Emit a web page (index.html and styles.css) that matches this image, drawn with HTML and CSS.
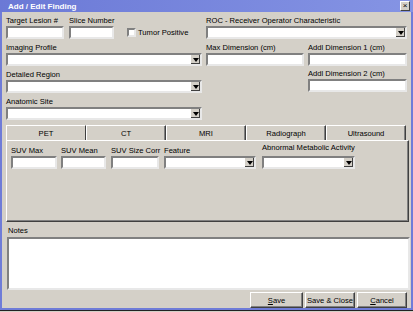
FILE: index.html
```html
<html>
  <head>
    <meta http-equiv="content-type" content="text/html;charset=UTF8">
    <link rel="stylesheet" href="styles.css">
    <title>Add / Edit Finding</title>
  </head>
  <body>
    <div class="window">
      <!-- title bar -->
      <div class="titlebar">
        <span class="title">Add / Edit Finding</span>
        <span class="close">&#215;</span>
      </div>
      <div class="client">
        <div class="fields">
          <div class="first_row">
            <div class="field w_lesion">
              <div class="label">Target Lesion #</div>
              <div class="box"></div>
            </div>
            <div class="field w_slice">
              <div class="label">Slice Number</div>
              <div class="box"></div>
            </div>
            <label class="check"><span class="check_box"></span>Tumor Positive</label>
          </div>
          <div class="field span2">
            <div class="label">ROC - Receiver Operator Characteristic</div>
            <div class="box combo"><span class="arrow"></span></div>
          </div>

          <div class="field">
            <div class="label">Imaging Profile</div>
            <div class="box combo"><span class="arrow"></span></div>
          </div>
          <div class="field">
            <div class="label">Max Dimension (cm)</div>
            <div class="box"></div>
          </div>
          <div class="field">
            <div class="label">Addl Dimension 1 (cm)</div>
            <div class="box"></div>
          </div>

          <div class="field">
            <div class="label">Detailed Region</div>
            <div class="box combo"><span class="arrow"></span></div>
          </div>
          <div></div>
          <div class="field up1">
            <div class="label">Addl Dimension 2 (cm)</div>
            <div class="box"></div>
          </div>

          <div class="field">
            <div class="label">Anatomic Site</div>
            <div class="box combo"><span class="arrow"></span></div>
          </div>
        </div>

        <!-- modality tabs -->
        <div class="tabs">
          <div class="tab active">PET</div>
          <div class="tab">CT</div>
          <div class="tab">MRI</div>
          <div class="tab">Radiograph</div>
          <div class="tab">Ultrasound</div>
        </div>
        <div class="tab_panel">
          <div class="field w_suv">
            <div class="label">SUV Max</div>
            <div class="box"></div>
          </div>
          <div class="field w_mean">
            <div class="label">SUV Mean</div>
            <div class="box"></div>
          </div>
          <div class="field w_corr">
            <div class="label">SUV Size Corr</div>
            <div class="box"></div>
          </div>
          <div class="field w_feature">
            <div class="label">Feature</div>
            <div class="box combo"><span class="arrow"></span></div>
          </div>
          <div class="field w_abnormal">
            <div class="label">Abnormal Metabolic Activity</div>
            <div class="box combo"><span class="arrow"></span></div>
          </div>
        </div>

        <div class="notes_label">Notes</div>
        <div class="notes"></div>

        <div class="buttons">
          <button class="btn b_save"><u>S</u>ave</button>
          <button class="btn b_close">Save &amp; Close</button>
          <button class="btn b_cancel"><u>C</u>ancel</button>
        </div>
      </div>
    </div>
    <div class="below"></div>
  </body>
</html>
```

FILE: styles.css
```css
body{
  margin: 0;
  background: #d4d0c8;
  font-family: "Liberation Sans", Arial, sans-serif;
  font-size: 7.6px;
  color: #000;
  overflow: hidden;
}
.window{
  width: 409px;
  height: 308px;
  border: 2px solid #6f7cd8;
  border-top: 0;
  background: #d4d0c8;
  display: flex;
  flex-direction: column;
}
.titlebar{
  height: 13px;
  margin: 0 -2px;
  padding: 0 3px 0 8px;
  background: linear-gradient(to right, #6b79d6, #8594e4);
  display: flex;
  align-items: center;
  justify-content: space-between;
}
.title{
  color: #fff;
  font-weight: bold;
  font-size: 8px;
  padding-top: 1px;
}
.close{
  width: 8px;
  height: 8px;
  background: #d4d0c8;
  border: 1px solid;
  border-color: #fff #404040 #404040 #fff;
  font-size: 8px;
  line-height: 8px;
  text-align: center;
  color: #000;
}
.client{
  padding: 4px 4px 0 4px;
  flex: 1;
  display: flex;
  flex-direction: column;
}
.fields{
  display: grid;
  grid-template-columns: 196px 98px 99px;
  column-gap: 4px;
  row-gap: 4px;
}
.span2{
  grid-column: span 2;
}
.field{
  display: flex;
  flex-direction: column;
}
.up1{
  margin-top: -1px;
}
.label{
  height: 10px;
  line-height: 9px;
  white-space: nowrap;
}
.box{
  height: 9px;
  background: #fff;
  border: 2px solid;
  border-color: #808080 #e8e8e8 #e8e8e8 #808080;
  position: relative;
}
.first_row{
  display: flex;
  align-items: flex-end;
  gap: 5px;
}
.w_lesion{ width: 58px; }
.w_slice{ width: 45px; }
.check{
  display: flex;
  align-items: center;
  gap: 2px;
  margin: 0 0 2px 8px;
  white-space: nowrap;
}
.check_box{
  width: 5px;
  height: 5px;
  background: #fff;
  border: 2px solid;
  border-color: #808080 #e8e8e8 #e8e8e8 #808080;
}
.arrow{
  position: absolute;
  right: 0;
  top: 0;
  width: 9px;
  height: 9px;
  background: #d4d0c8;
  border-left: 1px solid #fff;
  box-shadow: inset -1px -1px 0 #404040;
}
.arrow:after{
  content: "";
  position: absolute;
  left: 2px;
  top: 3px;
  border-left: 3px solid transparent;
  border-right: 3px solid transparent;
  border-top: 4px solid #000;
}
.tabs{
  display: flex;
  margin-top: 5px;
  width: 400px;
  height: 15px;
}
.tab{
  flex: 1;
  text-align: center;
  line-height: 15px;
  border: 1px solid;
  border-bottom: 0;
  border-color: #fff #404040 #404040 #fff;
  box-shadow: inset -1px 0 0 #808080;
}
.tab.active{
  box-shadow: none;
}
.tab_panel{
  height: 75px;
  width: 397px;
  border: 1px solid;
  border-color: #fff #404040 #404040 #fff;
  box-shadow: inset -1px -1px 0 #808080;
  padding: 5px 0 0 4px;
  display: flex;
  align-items: flex-start;
}
.w_suv{ width: 46px; }
.w_mean{ width: 45px; margin-left: 4px; }
.w_corr{ width: 48px; margin-left: 5px; }
.w_feature{ width: 92px; margin-left: 5px; }
.w_abnormal{ width: 93px; margin-left: 6px; margin-top: -3px; }
.w_abnormal .label{ height: 13px; }
.notes_label{
  margin-top: 4px;
  margin-left: 2px;
  height: 9px;
  line-height: 9px;
}
.notes{
  margin: 2px 0 0 1px;
  width: 399px;
  height: 49px;
  background: #fff;
  border: 2px solid;
  border-color: #808080 #e8e8e8 #e8e8e8 #808080;
}
.buttons{
  display: flex;
  justify-content: flex-end;
  gap: 2px;
  margin-top: 2px;
}
.btn{
  height: 16px;
  padding: 0;
  font-family: "Liberation Sans", Arial, sans-serif;
  font-size: 7.6px;
  white-space: nowrap;
  background: #d4d0c8;
  border: 1px solid;
  border-color: #fff #404040 #404040 #fff;
  box-shadow: inset -1px -1px 0 #808080;
  color: #000;
}
.b_save{ width: 53px; }
.b_close{ width: 50px; }
.b_cancel{ width: 50px; }
.below{
  height: 4px;
  background: #d4d0c8;
  border-top: 1px solid #222;
}
```
